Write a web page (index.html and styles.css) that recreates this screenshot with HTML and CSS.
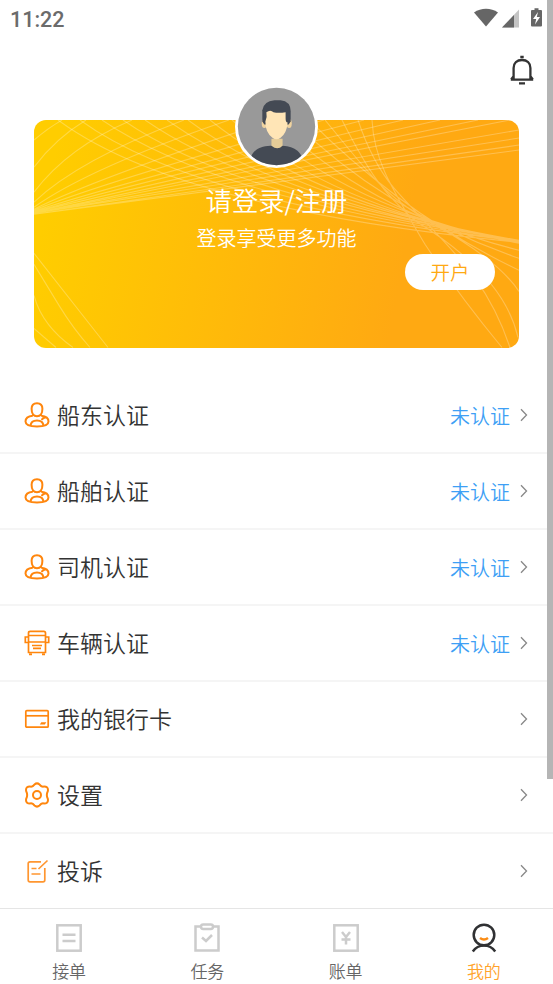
FILE: index.html
```html
<!DOCTYPE html>
<html lang="zh-CN">
<head>
<meta charset="utf-8">
<title>我的</title>
<link rel="stylesheet" href="styles.css">
</head>
<body>
<svg width="0" height="0" class="defs">
  <symbol id="person" viewBox="0 0 26 26">
    <path d="M13 1.300C9.200 1.300 7.600 3.200 7.600 6.800c0 4.500 2 7.400 5.400 7.400s5.400-2.900 5.400-7.400c0-3.600-1.600-5.500-5.400-5.500zM8.800 13.800C4 14.200 1.500 16 1.500 19.600c0 3.500 4 4.900 11.500 4.900S24.500 23.100 24.500 19.600c0-3.600-2.500-5.400-7.300-5.800M6.500 23.800c.3-3.300 2.700-5.300 6.500-5.300s6.200 2 6.500 5.300M17.800 18c.6-1.700 2-2.500 4.200-2.700"/>
  </symbol>
  <symbol id="arrow" viewBox="0 0 10 14"><path d="M2 1.300 7.500 7 2 12.700"/></symbol>
</svg>
<div class="screen">
  <header class="status">
    <span>11:22</span>
    <svg class="status-icons" width="72" height="22" viewBox="0 0 72 22">
      <path d="M1 4.500C8-.5 18-.5 25 4.500L13 18.500z"/>
      <path class="faded" d="M29 19.500 46 1.500v18z"/><path d="M29 19.500 41 7V19.500z"/>
      <path d="M59 2h2.500V.300h4V2H68q1 0 1 1V17.500q0 1-1 1H59q-1 0-1-1V3q0-1 1-1z"/>
      <path class="bolt" d="m65 4-5 7h3.200l-1.200 5.500 5-7.500h-3.200z"/>
    </svg>
  </header>
  <div class="tools">
    <svg width="26" height="30" viewBox="0 0 26 30"><path d="M11.300 2h3.400M1.800 24.600H24.200M4.600 24V13C4.600 8 8 5 13 5s8.400 3 8.400 8v11M2.200 24.500 4.800 21M23.800 24.500 21.200 21M10 28.400h6"/></svg>
  </div>
  <section class="card">
    <svg class="waves" viewBox="0 0 485 227" preserveAspectRatio="none">
      <path d="M0 20Q14 8 28 0M0 47Q22 18 52 0M0 72Q34 27 98 0M0 82Q44 40 150 0M0 87Q55 48 195 0M0 89Q65 57 240 0M0 90Q70 62 290 0M0 91Q80 65 330 0M0 92Q85 67 369 0M0 92Q95 69 406 0M0 93Q100 71 444 0M0 93Q105 73 476 0M0 93Q115 74 485 10M0 93Q125 74 485 18M0 94Q135 74 485 25M0 94Q140 75 485 30"/>
      <path d="M24 0Q145 89 485 122M46 0Q160 83 485 121M68 0Q185 80 485 121M89 0Q205 80 485 120M111 0Q228 80 485 120M133 0Q250 83 485 120M154 0Q265 83 485 120M176 0Q282 85 485 121M198 0Q297 87 485 122M219 0Q315 89 485 123M240 0Q335 92 485 130M258 0Q350 91 485 138M275 0Q370 95 485 150M291 0C335 53 350 77 405 107Q465 141 485 171M308 0C335 53 350 74 382 101Q470 155 484 217M324 0Q338 42 360 68C410 125 450 150 476 227M338 0C340 40 356 65 391 124Q425 175 468 227"/>
      <path d="M0 133 74 227M0 144 25 185Q39 208 56 227M0 175Q8 205 39 227M0 208 22 227"/>
    </svg>
    <svg class="avatar" viewBox="0 0 82 82">
      <defs><clipPath id="face"><circle cx="41" cy="41" r="38.200"/></clipPath></defs>
      <circle cx="41" cy="41" r="41" fill="#fff"/>
      <g clip-path="url(#face)">
        <path fill="#999" d="M0 0h82v82H0z"/>
        <path fill="#444a54" d="M13 82c2-17 9-21 22-22h12c13 1 20 6 22 22z"/>
        <path fill="#e5cc98" d="M36 53h11v7q-5 5-11 0z"/>
        <ellipse cx="29" cy="38" rx="2.600" ry="4.500" fill="#f0d39f"/><ellipse cx="53.500" cy="38" rx="2.600" ry="4.500" fill="#f0d39f"/>
        <path fill="#444a54" d="M27 36V25q1-9 12-10h6q10 1 10 11v10l-2 3H29z"/>
        <path fill="#ffe5b6" d="M30 36q2-4 1-9 4-3 7 0 5 1 12 0v6q0 4 2 4-1 11-7 15-4 3-8 0-7-5-7-16z"/>
      </g>
    </svg>
    <h1>请登录/注册</h1>
    <p>登录享受更多功能</p>
    <button class="open">开户</button>
  </section>
  <main class="list">
    <div class="row"><svg class="icon"><use href="#person"/></svg><span class="name">船东认证</span><span class="state">未认证</span><svg class="arrow"><use href="#arrow"/></svg></div>
    <div class="row"><svg class="icon"><use href="#person"/></svg><span class="name">船舶认证</span><span class="state">未认证</span><svg class="arrow"><use href="#arrow"/></svg></div>
    <div class="row"><svg class="icon"><use href="#person"/></svg><span class="name">司机认证</span><span class="state">未认证</span><svg class="arrow"><use href="#arrow"/></svg></div>
    <div class="row"><svg class="icon bus" viewBox="0 0 26 26"><path d="M4.500 22.500V3q0-1.700 1.700-1.700h13.600q1.700 0 1.700 1.700v19.500zM4.500 5.500h17M4.500 12h17M4.500 7H1.300v5.500h3.200M21.500 7h3.200v5.500h-3.200M8 15.500h10M9 18.300h8M5 24.300h3M18 24.300h3"/></svg><span class="name">车辆认证</span><span class="state">未认证</span><svg class="arrow"><use href="#arrow"/></svg></div>
    <div class="row"><svg class="icon bus" viewBox="0 0 26 26"><rect x="1.800" y="4.700" width="22.400" height="16.500" rx="1"/><path d="M2 9.800h22"/><path class="solid" d="M17.300 16.200h5l-1.500 2.300h-5z"/></svg><span class="name">我的银行卡</span><svg class="arrow"><use href="#arrow"/></svg></div>
    <div class="row"><svg class="icon" viewBox="0 0 26 26"><path d="M10.500 2.500Q13 .300 15.500 2.500l1.700 1.700q1.100.600 2.600.400 4.200-.200 4.200 3.300 0 1.300-.800 2.800-.700 2.300 0 4.600.8 1.500.8 2.800 0 3.500-4.200 3.300-1.500-.200-2.600.4l-1.700 1.700Q13 25.700 10.500 23.500l-1.700-1.700q-1.100-.6-2.600-.4Q2 21.600 2 18.100q0-1.300.8-2.800.7-2.300 0-4.600Q2 9.200 2 7.900q0-3.500 4.200-3.300 1.500.2 2.600-.4z"/><circle cx="13" cy="13" r="4"/></svg><span class="name">设置</span><svg class="arrow"><use href="#arrow"/></svg></div>
    <div class="row"><svg class="icon thin" viewBox="0 0 26 26"><path d="M17 3.800H6q-1.800 0-1.800 1.800v16.500q0 1.800 1.800 1.800h13q1.800 0 1.800-1.800V10M14.500 11 23.500 2.500M7.500 10.500h5M7.500 16h9"/></svg><span class="name">投诉</span><svg class="arrow"><use href="#arrow"/></svg></div>
  </main>
  <nav class="tabs">
    <a><svg viewBox="0 0 30 30"><rect x="3.300" y="2.300" width="23.400" height="25.400"/><path d="M8.500 11.800h13M8.500 18h13"/></svg>接单</a>
    <a><svg viewBox="0 0 30 30"><path d="M9 3.500H3.500V27.500h23V3.500H21"/><rect x="9" y="1.500" width="12" height="4.500" rx="2.200"/><path d="m10 14.500 4 3.500 6-6"/></svg>任务</a>
    <a><svg viewBox="0 0 30 30"><rect x="3.300" y="2.300" width="23.400" height="25.400"/><path d="m11 9 4 5 4-5M15 14v7.500M10.500 16.500h9"/></svg>账单</a>
    <a class="active"><svg viewBox="0 0 30 30"><circle cx="15" cy="12" r="10.300"/><path d="M3.800 28.500Q8 22.500 15 22.500T26.200 28.500"/><path class="smile" d="M11 15q4 3 8 0"/></svg>我的</a>
  </nav>
  <div class="scroll"></div>
</div>
</body>
</html>
```

FILE: styles.css
```css
* { box-sizing: border-box; }
body { margin: 0; background: #fff; font-family: "Noto Sans CJK SC", sans-serif; font-weight: 350; color: #333; }
svg { fill: none; flex: none; }
.defs { position: absolute; }
.screen { position: relative; width: 553px; height: 984px; overflow: hidden; display: flex; flex-direction: column; }
.status { height: 40px; flex: none; padding: 0 8px 2px 10px; display: flex; align-items: center; justify-content: space-between; font: 500 21.5px Roboto, sans-serif; color: #6b6b6b; }
.status-icons { fill: #666; }
.status-icons .faded { fill: #c4c4c4; }
.status-icons .bolt { fill: #fff; }
.tools { height: 80px; flex: none; padding: 15px 18px; display: flex; justify-content: flex-end; }
.tools svg { stroke: #333; stroke-width: 2.3; }
.card { position: relative; flex: none; height: 227.5px; margin: 0 34px; border-radius: 12px; background: linear-gradient(100deg, #ffcd00 5%, #ffa912 75%); color: #fff; display: flex; flex-direction: column; align-items: center; padding-top: 61px; }
.waves { position: absolute; inset: 0; width: 100%; height: 100%; border-radius: 12px; stroke: #fff; stroke-opacity: .26; stroke-width: 1.1; }
.avatar { position: absolute; top: -35px; left: 201px; width: 83px; height: 83px; }
h1, p, .open { position: relative; margin: 0; font-weight: 350; }
h1 { font-size: 26.3px; line-height: 38px; }
p { font-size: 20px; line-height: 37px; }
.open { align-self: flex-end; margin: -2px 24px 0 0; width: 90px; height: 36px; padding: 0; border: 0; border-radius: 18px; background: #fff; color: #ffa912; font: 350 19.5px/36px "Noto Sans CJK SC", sans-serif; }
.list { flex: none; margin-top: 30.5px; height: 530px; display: grid; grid-template-rows: repeat(6, 75.95px) 1fr; }
.row { display: flex; align-items: center; padding: 1px 24px 0 24px; border-bottom: 2px solid #f5f5f5; }
.row:last-child { border-bottom: 0; }
.icon { width: 26px; height: 26px; stroke: #ff860d; stroke-width: 2; }
.icon.bus { stroke-width: 1.7; }
.icon.thin { stroke-width: 1.7; stroke: #ff9630; }
.icon .solid { fill: #ff860d; stroke: none; }
.name { margin: -3px 0 0 7px; font-size: 23px; line-height: 34px; }
.state { margin-left: auto; font-size: 20px; color: #3e9ff5; }
.arrow { width: 10px; height: 14px; margin-left: auto; stroke: #888; stroke-width: 1.3; }
.state + .arrow { margin-left: 9px; }
.tabs { flex: 1; border-top: 1px solid #e5e5e5; background: #fff; display: grid; grid-template-columns: repeat(4, 1fr); }
.tabs a { display: flex; flex-direction: column; align-items: center; padding-top: 14px; font-size: 17px; line-height: 24px; gap: 6px; color: #666; }
.tabs svg { width: 30px; height: 30px; stroke: #ccc; stroke-width: 2.5; }
.tabs .active { color: #ffa32b; }
.tabs .active svg { stroke: #303133; }
.tabs .active .smile { stroke: #fa8c16; }
.scroll { position: absolute; top: 0; right: 0; width: 6px; height: 779px; background: #b5b5b5; }
```
